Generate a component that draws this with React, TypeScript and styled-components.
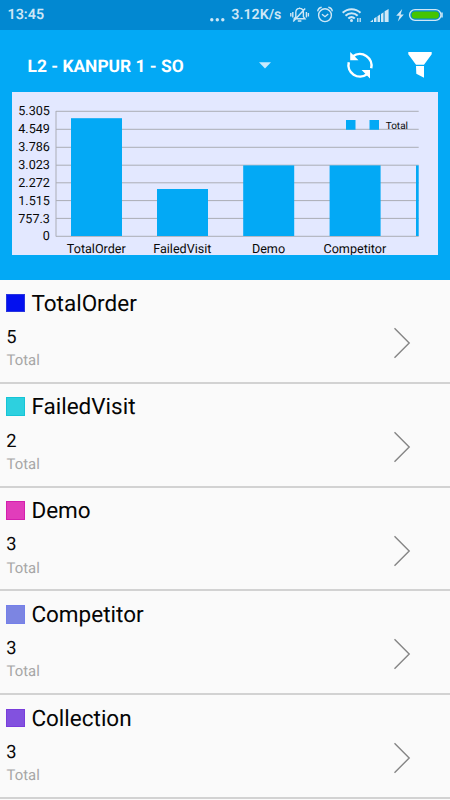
import React from "react";
import styled, { createGlobalStyle } from "styled-components";

const GlobalStyle = createGlobalStyle`
  * { box-sizing: border-box; }
  body {
    margin: 0;
    background: #fafafa;
    font-family: Roboto, sans-serif;
    text-rendering: geometricPrecision;
    overflow: hidden;
  }
  svg { display: block; flex: none; }
`;

const Screen = styled.main`
  width: 450px;
  height: 800px;
  overflow: hidden;
  background: #fafafa;
`;

const StatusBar = styled.header`
  display: flex;
  align-items: center;
  justify-content: space-between;
  height: 30px;
  padding-left: 7.5px;
  background: #0288d1;
  color: #cfe7f6;
  font-size: 14.3px;
  font-weight: 600;
  line-height: 33px;
`;

const StatusIcons = styled.div`
  display: flex;
  align-items: center;
`;

const Speed = styled.span`
  width: 56px;
  padding-left: 4.3px;
  font-size: 14.2px;
  white-space: nowrap;
`;

const Header = styled.section`
  height: 250px;
  background: #03a9f5;
`;

const Toolbar = styled.div`
  display: flex;
  align-items: center;
  height: 62px;
  padding-top: 9px;
  padding-left: 27.5px;
  color: #fff;
`;

const Location = styled.span`
  width: 230.5px;
  padding-top: 2px;
  font-size: 17.4px;
  font-weight: 700;
  line-height: 20px;
`;

const ChartPanel = styled.div`
  width: 426px;
  height: 163px;
  margin-left: 12px;
  background: #e3e8ff;
  overflow: hidden;
`;

const ChartText = styled.text<{ $size?: number }>`
  font-family: Roboto, sans-serif;
  font-size: ${(p) => p.$size ?? 12.6}px;
  fill: #080808;
`;

const Item = styled.article`
  display: flex;
  justify-content: space-between;
  height: 103.75px;
  padding: 9px 38px 0 6px;
  border-bottom: 2px solid #d2d2d2;
`;

const Heading = styled.div`
  display: flex;
  align-items: center;
  gap: 6.4px;
  height: 28px;
`;

const Swatch = styled.span<{ $color: string; $edge: string }>`
  width: 19px;
  height: 18.6px;
  border: 1px solid ${(p) => p.$edge};
  background: ${(p) => p.$color};
`;

const Name = styled.span`
  padding-top: 1.4px;
  color: #050505;
  font-size: 22.5px;
  line-height: 28px;
`;

const Value = styled.div`
  margin-top: 8px;
  padding: 0.8px 0 0 0.3px;
  height: 24px;
  color: #080808;
  font-size: 18.3px;
  line-height: 24px;
`;

const Caption = styled.div`
  padding-left: 0.5px;
  color: #a6a6a6;
  font-size: 14.9px;
  line-height: 22px;
`;

const Arrow = styled.svg`
  margin-top: 38px;
`;

const gridLines = [
  { label: "5.305", y: 19.3 },
  { label: "4.549", y: 37.3 },
  { label: "3.786", y: 55.3 },
  { label: "3.023", y: 73.2 },
  { label: "2.272", y: 90.8 },
  { label: "1.515", y: 108.6 },
  { label: "757.3", y: 126.4 },
  { label: "0", y: 144.3 },
];

const bars = [
  { label: "TotalOrder", x: 59, top: 26.2, width: 51 },
  { label: "FailedVisit", x: 145, top: 97, width: 51 },
  { label: "Demo", x: 231.2, top: 73.4, width: 51 },
  { label: "Competitor", x: 317.6, top: 73.4, width: 51 },
  { label: "", x: 404, top: 73.4, width: 2.7 },
];

const items = [
  { name: "TotalOrder", value: 5, color: "#0310ef", edge: "#2834df" },
  { name: "FailedVisit", value: 2, color: "#2dd0df", edge: "#16c4d6" },
  { name: "Demo", value: 3, color: "#e13dbb", edge: "#d41fae" },
  { name: "Competitor", value: 3, color: "#7c85e2", edge: "#7480ea" },
  { name: "Collection", value: 3, color: "#8251df", edge: "#793ddb" },
];

function StatusGlyphs() {
  return (
    <svg width="167" height="30" viewBox="-5 0 167 30" fill="none" stroke="#cfe7f6" strokeWidth="1.4">
      <g transform="translate(1.6 0)">
        <path d="M4.6 18.8h10.8l-1.6-2.2v-4c0-5.6-7.6-5.6-7.6 0v4zM8.2 21h3.6M10 8.6V7.4M3.6 21.5 15.6 8.5M3.2 12v5.6M1.2 13v3.6M16.8 12v5.6M18.8 13v3.6" />
      </g>
      <circle cx="37" cy="15.2" r="6.4" />
      <path d="m34 14.2 3 2.5 3.2-2.7M29.7 11.4c.2-2.2 1.8-3.8 4-4.2M44.3 11.4c-.2-2.2-1.8-3.8-4-4.2" />
      <g strokeWidth="2.1">
        <path d="M54.7 12.7c5.2-4.7 12.6-4.7 17.8 0M57.5 15.7c3.6-3.3 8.7-3.3 12.2 0M60.3 18.5c2-1.8 4.5-1.8 6.5 0" />
      </g>
      <circle cx="63.5" cy="20.5" r="1.5" fill="#cfe7f6" stroke="none" />
      <path d="M69.8 18v4M72.2 18v4" strokeWidth="1.3" />
      <g fill="#cfe7f6" stroke="none">
        <path d="m82 22 3-2.5V22zM86 18.6l2.5-1.8V22H86zM89.5 16.3l2.5-1.8V22h-2.5zM93 14l2.5-1.8V22H93zM96.6 11.2 100.6 9v13h-4z" />
        <path d="m114.2 9-6 6.8h3.4L109.8 21.5l6-7h-3.2z" />
      </g>
      <rect x="121.6" y="9.6" width="31.4" height="10.8" rx="5.4" />
      <path d="M154 12.5v5" strokeWidth="1.5" />
      <rect x="123.6" y="11.4" width="27.4" height="7.2" rx="3.6" fill="#45c400" stroke="none" />
    </svg>
  );
}

function Chart() {
  return (
    <ChartPanel>
      <svg width="426" height="163" viewBox="0 0 426 163">
        {gridLines.map((line) => (
          <g key={line.label}>
            <path d={`M44 ${line.y}H406.7`} stroke="#abadb6" strokeWidth="1" />
            <ChartText x="37.9" y={line.y + 4.1} textAnchor="end">{line.label}</ChartText>
          </g>
        ))}
        <path d="M44 19v125.5" stroke="#abadb6" />
        {bars.map((bar) => (
          <g key={bar.x}>
            <rect x={bar.x} y={bar.top} width={bar.width} height={144 - bar.top} fill="#03a9f5" />
            {bar.label && (
              <ChartText x={bar.x + 25.3} y="161" textAnchor="middle">{bar.label}</ChartText>
            )}
          </g>
        ))}
        <path d="M334 28h9.5v9.7H334zM357.5 28h9.5v9.7h-9.5z" fill="#03a9f5" />
        <ChartText x="373.7" y="37.3" $size={10}>Total</ChartText>
      </svg>
    </ChartPanel>
  );
}

export default function App() {
  return (
    <Screen>
      <GlobalStyle />
      <StatusBar>
        <span>13:45</span>
        <StatusIcons>
          <svg width="20" height="30" viewBox="0 0 20 30" fill="#cfe7f6">
            <circle cx="4.8" cy="19.7" r="1.7" /><circle cx="10.3" cy="19.7" r="1.7" /><circle cx="15.8" cy="19.7" r="1.7" />
          </svg>
          <Speed>3.12K/s</Speed>
          <StatusGlyphs />
        </StatusIcons>
      </StatusBar>
      <Header>
        <Toolbar>
          <Location>L2 - KANPUR 1 - SO</Location>
          <svg width="192" height="36" viewBox="258 48 192 36">
            <path d="M259 62.2h12l-6 6.2z" fill="#c8eafd" />
            <g fill="none" stroke="#fff" strokeWidth="2.5">
              <path d="M353 56.3A11.6 11.6 0 0 1 371.2 68.2M367 74.3A11.6 11.6 0 0 1 348.8 62.2" />
            </g>
            <path d="M350.2 52v8.2h8.3zM370 78.5v-8.4h-8.4z" fill="#fff" />
            <path d="M408.3 52h23.4v2.2L424 64.7h-8L408.3 54.2zM416 66h8v11.7l-7.7-4z" fill="#fff" />
          </svg>
        </Toolbar>
        <Chart />
      </Header>
      {items.map((item) => (
        <Item key={item.name}>
          <div>
            <Heading>
              <Swatch $color={item.color} $edge={item.edge} />
              <Name>{item.name}</Name>
            </Heading>
            <Value>{item.value}</Value>
            <Caption>Total</Caption>
          </div>
          <Arrow width="20" height="32" viewBox="0 0 20 32" fill="none" stroke="#858585" strokeWidth="1.4">
            <path d="M2.5 1.3 17.2 16 2.5 30.7" />
          </Arrow>
        </Item>
      ))}
    </Screen>
  );
}
